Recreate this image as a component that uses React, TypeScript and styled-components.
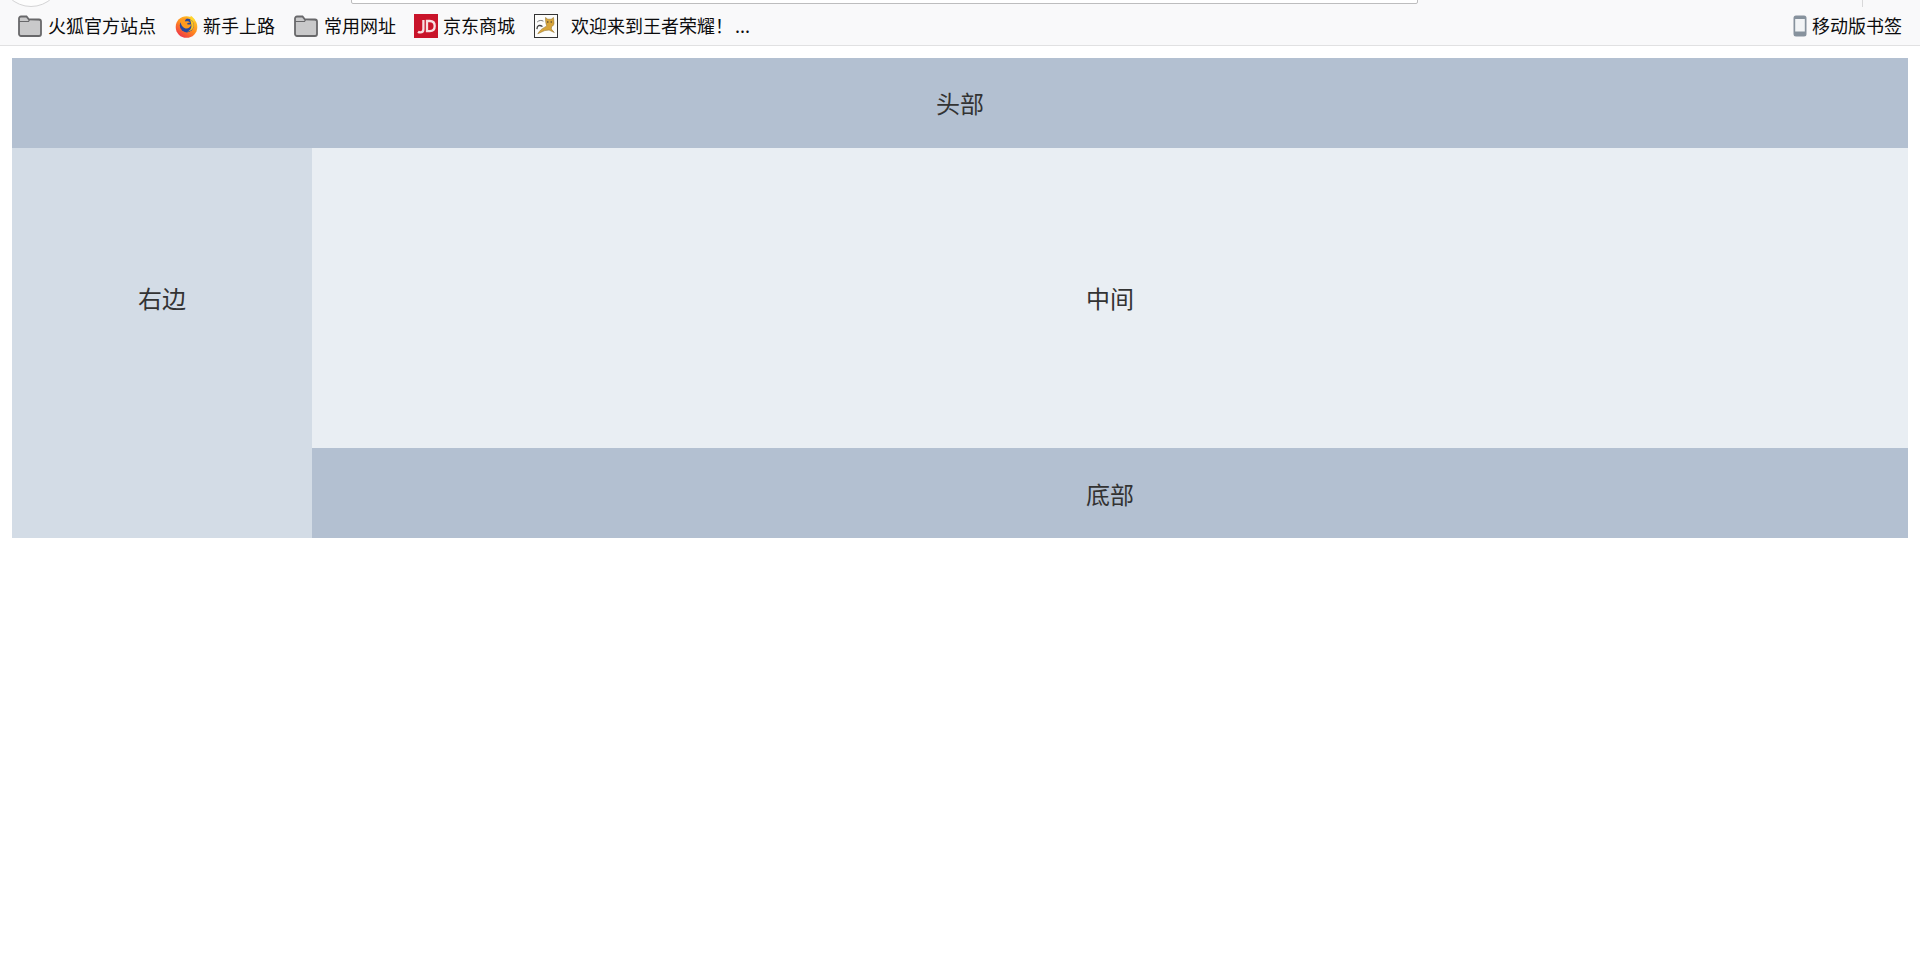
import React from 'react'
import styled, { createGlobalStyle } from 'styled-components'

const GlobalStyle = createGlobalStyle`
    html, body {
        margin: 0;
        padding: 0;
        background: #fff;
    }
    body {
        font-family: "Noto Sans CJK SC", "Liberation Sans", sans-serif;
    }
`

const Browser = styled.div`
    height: 46px;
    background: #f9f9fa;
    border-bottom: 1px solid #e1e1e2;
    box-sizing: border-box;
    overflow: hidden;
    display: flex;
    flex-direction: column;
`

const TopStrip = styled.div`
    height: 6px;
    flex: none;
    display: flex;
    align-items: flex-end;
`

const RoundButton = styled.div`
    width: 62px;
    height: 62px;
    flex: none;
    margin-bottom: -1px;
    box-sizing: border-box;
    border: 1px solid #d4d4d5;
    border-radius: 50%;
    background: #fdfdfd;
`

const UrlBar = styled.div`
    width: 1067px;
    height: 40px;
    flex: none;
    margin-left: 289px;
    margin-bottom: 2px;
    box-sizing: border-box;
    border: 1px solid #bdbdbe;
    border-radius: 2px;
    background: #fff;
`

const Divider = styled.div`
    width: 1px;
    height: 7px;
    flex: none;
    align-self: flex-start;
    margin-left: 444px;
    background: #d8d8d9;
`

const BookmarkBar = styled.div`
    flex: 1;
    display: flex;
    align-items: center;
    padding: 0 18px;
    margin-top: 1px;
    color: #0c0c0d;
    font-size: 18px;
`

const Bookmark = styled.div<{ $gap: number; $width: number }>`
    display: flex;
    align-items: center;
    flex: none;
    width: ${ p => p.$width }px;
    gap: ${ p => p.$gap }px;
    white-space: nowrap;
`

const Label = styled.span`
    padding-bottom: 2px;
`

const Ellipsis = styled.span`
    margin-left: 2px;
`

const Spacer = styled.div`
    flex: 1;
`

const Icon = styled.svg`
    display: block;
    flex: none;
`

const Page = styled.div`
    padding: 12px 12px 0;
    display: grid;
    grid-template-columns: 300px 1fr;
    grid-template-rows: 90px 300px 90px;
    font-size: 24px;
    color: #333;
`

const Cell = styled.div`
    display: flex;
    align-items: center;
    justify-content: center;
    padding-bottom: 2px;
`

const Header = styled(Cell)`
    grid-column: 1 / 3;
    background: #b3c0d1;
`

const Aside = styled(Cell)`
    grid-row: 2 / 4;
    background: #d3dce6;
    padding-bottom: 92px;
`

const Main = styled(Cell)`
    background: #e9eef3;
`

const Footer = styled(Cell)`
    background: #b3c0d1;
    padding-bottom: 0;
`

const FolderIcon = () => (
    <Icon width="24" height="22" viewBox="0 0 24 22">
        <path d="M1 3.5A2 2 0 0 1 3 1.5h5.5L11 4.5h10A2 2 0 0 1 23 6.5v12.5a2 2 0 0 1-2 2H3a2 2 0 0 1-2-2z" fill="#c9c9ca" stroke="#68686a" strokeWidth="1.8" />
        <path d="M1 6.5h9.5l1-1.5H22" fill="#f4f4f4" stroke="#68686a" strokeWidth="1.2" />
    </Icon>
)

const FirefoxIcon = () => (
    <Icon width="23" height="23" viewBox="0 0 23 23">
        <defs>
            <linearGradient id="fx-ring" x1="0.85" y1="0" x2="0.15" y2="1">
                <stop offset="0" stopColor="#ffd52b" />
                <stop offset="0.5" stopColor="#ff8a1f" />
                <stop offset="1" stopColor="#ee2a50" />
            </linearGradient>
        </defs>
        <circle cx="11.5" cy="12" r="10.8" fill="url(#fx-ring)" />
        <path d="M15.5 0.4c2.4 1.6 4.2 3.6 5 6l-4.6-.4z" fill="#ffd52b" />
        <circle cx="11.8" cy="10.4" r="7" fill="#26479f" />
        <path d="M4.8 6.5C6.4 3.6 9.6 2.4 12.6 3c-1.7.9-2.5 2-2.7 3.4 1.7-.5 4.4-.4 5.4 1.4-1.6-.3-2.9.3-3.4 1.2 1 .6 2.7.8 4.3.2-.3 2.8-2.9 4.7-5.6 4.2-2.4-.5-4.2-2.6-4.6-4.6z" fill="#ff9a1f" />
        <path d="M15 4.5c3 1.3 4.4 4.4 3.5 7.6-.8 2.8-3.4 4.6-6.2 4.4 3.3-1.2 4.4-4 4-6.6-.2-1.8-.6-3.6-1.3-5.4z" fill="#ffc41f" />
    </Icon>
)

const JdIcon = () => (
    <Icon width="24" height="24" viewBox="0 0 24 24">
        <rect width="24" height="24" fill="#c9142a" />
        <path d="M9.4 6v9.2c0 2.2-1.3 3.2-3.1 3.2-.8 0-1.6-.2-2.3-.7" fill="none" stroke="#f8dfe2" strokeWidth="2.3" />
        <path d="M13 7h2.8c3.2 0 4.9 2 4.9 5s-1.7 5.1-4.9 5.1H13z" fill="none" stroke="#f8dfe2" strokeWidth="2.3" />
    </Icon>
)

const TomcatIcon = () => (
    <Icon width="24" height="24" viewBox="0 0 24 24">
        <rect x="0.5" y="0.5" width="23" height="23" fill="#fdfdfb" stroke="#333" />
        <path d="M11.5 3.5l2.3 1.7h3.4l2.3-1.7.5 5.5c0 1.8-1 3-2.4 3.7l-.3 2.3 3 3.5-5.2-2.4-4.3.5-7 3.2c1.4-2.6 3.7-5 6.6-6.4l2.4-1.5c-1-2-1.3-4.8-1.3-8.4z" fill="#d8a53a" stroke="#8a6a24" strokeWidth="0.5" />
        <path d="M8.5 12.5c-3.2-2-5.4-1-5.6 2.6" fill="none" stroke="#444" strokeWidth="1.3" />
        <path d="M3.2 8C5 6.2 7.6 6 9.4 7.2" fill="none" stroke="#777" strokeWidth="1" />
        <circle cx="13.8" cy="8" r="0.7" fill="#333" />
        <circle cx="17.2" cy="8" r="0.7" fill="#333" />
    </Icon>
)

const PhoneIcon = () => (
    <Icon width="14" height="22" viewBox="0 0 14 22">
        <rect x="0.5" y="0.5" width="13" height="21" rx="2.5" fill="#87929d" />
        <rect x="2.2" y="4" width="9.6" height="12.5" fill="#f2f4f6" />
    </Icon>
)

const App: React.FC = () => {
    return (
        <>
            <GlobalStyle />
            <Browser>
                <TopStrip>
                    <RoundButton />
                    <UrlBar />
                    <Divider />
                </TopStrip>
                <BookmarkBar>
                    <Bookmark $gap={ 6 } $width={ 157 }><FolderIcon /><Label>火狐官方站点</Label></Bookmark>
                    <Bookmark $gap={ 5 } $width={ 119 }><FirefoxIcon /><Label>新手上路</Label></Bookmark>
                    <Bookmark $gap={ 6 } $width={ 120 }><FolderIcon /><Label>常用网址</Label></Bookmark>
                    <Bookmark $gap={ 5 } $width={ 120 }><JdIcon /><Label>京东商城</Label></Bookmark>
                    <Bookmark $gap={ 13 } $width={ 220 }><TomcatIcon /><Label>欢迎来到王者荣耀！<Ellipsis>...</Ellipsis></Label></Bookmark>
                    <Spacer />
                    <Bookmark $gap={ 5 } $width={ 109 }><PhoneIcon /><Label>移动版书签</Label></Bookmark>
                </BookmarkBar>
            </Browser>
            <Page>
                <Header>头部</Header>
                <Aside>右边</Aside>
                <Main>中间</Main>
                <Footer>底部</Footer>
            </Page>
        </>
    )
}

export default App
